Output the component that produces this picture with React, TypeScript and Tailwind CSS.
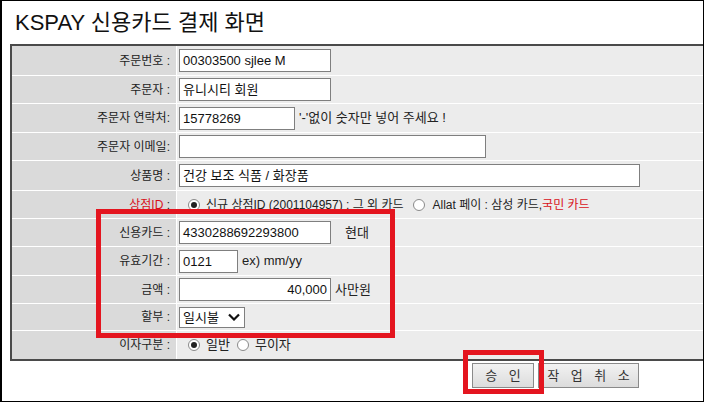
import React from "react";

const rowBase = "flex border-b border-white";

function Label({ children }: { children: React.ReactNode }) {
  return (
    <div className="flex w-[164px] shrink-0 items-center justify-end bg-[#dadada] pr-[6px] text-[12px] text-[#222]">
      {children}
    </div>
  );
}

function Field({ value, w, right }: { value?: string; w: string; right?: boolean }) {
  return (
    <div
      className={`flex h-[23px] ${w} items-center border border-[#7f7f7f] bg-white px-[3px] text-[13px] leading-none text-[#111] ${
        right ? "justify-end" : ""
      }`}
    >
      {value}
    </div>
  );
}

function Radio({ checked }: { checked?: boolean }) {
  return (
    <span className="mx-[3px] flex h-[12px] w-[12px] items-center justify-center rounded-full border border-[#8a8a8a] bg-white">
      {checked ? <span className="h-[6px] w-[6px] rounded-full bg-[#222]" /> : null}
    </span>
  );
}

type Row = { h: string; label: React.ReactNode; body: React.ReactNode };

const rows: Row[] = [
  { h: "h-[30px]", label: "주문번호 :", body: <Field value="00303500 sjlee M" w="w-[152px]" /> },
  { h: "h-[28px]", label: "주문자 :", body: <Field value="유니시티 회원" w="w-[152px]" /> },
  {
    h: "h-[29px]",
    label: "주문자 연락처:",
    body: (
      <>
        <Field value="15778269" w="w-[116px]" />
        <span className="ml-[4px] text-[13px] text-[#222]">'-'없이 숫자만 넣어 주세요 !</span>
      </>
    )
  },
  { h: "h-[28px]", label: "주문자 이메일:", body: <Field w="w-[307px]" /> },
  { h: "h-[30px]", label: "상품명 :", body: <Field value="건강 보조 식품 / 화장품" w="w-[461px]" /> },
  {
    h: "h-[28px]",
    label: (
      <>
        <span className="text-[#d8101a]">상점ID</span>&nbsp;:
      </>
    ),
    body: (
      <div className="flex items-center pl-[6px] text-[12px] text-[#222]">
        <Radio checked />
        <span className="ml-[3px]">신규 상점ID (2001104957) : 그 외 카드</span>
        <span className="ml-[6px]" />
        <Radio />
        <span className="ml-[5px]">
          Allat 페이 : 삼성 카드,<span className="text-[#d8101a]">국민 카드</span>
        </span>
      </div>
    )
  },
  {
    h: "h-[28px]",
    label: "신용카드 :",
    body: (
      <>
        <Field value="4330288692293800" w="w-[152px]" />
        <span className="ml-[14px] text-[13px] text-[#222]">현대</span>
      </>
    )
  },
  {
    h: "h-[29px]",
    label: "유효기간 :",
    body: (
      <>
        <Field value="0121" w="w-[59px]" />
        <span className="ml-[4px] text-[13px] text-[#222]">ex) mm/yy</span>
      </>
    )
  },
  {
    h: "h-[28px]",
    label: "금액 :",
    body: (
      <>
        <Field value="40,000" w="w-[152px]" right />
        <span className="ml-[4px] text-[13px] text-[#222]">사만원</span>
      </>
    )
  },
  {
    h: "h-[27px]",
    label: "할부 :",
    body: (
      <div className="flex h-[21px] w-[66px] items-center justify-between border border-[#7f7f7f] bg-white pl-[3px] pr-[4px] text-[13px] leading-none text-[#111]">
        <span>일시불</span>
        <svg width="12" height="8" viewBox="0 0 12 8">
          <path d="M1 1.5 L6 6.5 L11 1.5" fill="none" stroke="#111" strokeWidth="2.2" />
        </svg>
      </div>
    )
  },
  {
    h: "h-[28px]",
    label: "이자구분 :",
    body: (
      <div className="flex items-center pl-[6px] text-[13px] text-[#222]">
        <Radio checked />
        <span className="ml-[3px]">일반</span>
        <span className="ml-[4px]" />
        <Radio />
        <span className="ml-[3px]">무이자</span>
      </div>
    )
  }
];

export default function App() {
  return (
    <div className="relative h-[402px] w-[704px] overflow-hidden border border-l-2 border-black bg-white font-['Liberation_Sans','Noto_Sans_CJK_KR',sans-serif]">
      <div className="flex h-[43px] items-center pl-[13px] text-[22px] leading-none text-[#111]">
        KSPAY 신용카드 결제 화면
      </div>

      <div className="ml-[8px] w-[700px] border-b-2 border-l-2 border-t-2 border-[#4a4a4a]">
        {rows.map((row, i) => (
          <div key={i} className={`${rowBase} ${row.h} ${i === rows.length - 1 ? "border-b-0" : ""}`}>
            <Label>{row.label}</Label>
            <div className="flex flex-1 items-center border-l border-white bg-[#ececec] pl-[2px]">{row.body}</div>
          </div>
        ))}
      </div>

      <div className="mt-[2px] flex gap-[4px] pl-[470px]">
        <button className="h-[25px] w-[62px] border border-[#8a8a8a] bg-gradient-to-b from-[#f2f2f2] to-[#dcdcdc] pl-[4px] text-[13px] tracking-[4px] text-[#333]">
          승 인
        </button>
        <button className="h-[25px] w-[101px] border border-[#8a8a8a] bg-gradient-to-b from-[#f2f2f2] to-[#dcdcdc] pl-[4px] text-[13px] tracking-[4px] text-[#333]">
          작 업 취 소
        </button>
      </div>

      {/* annotation boxes */}
      <div className="absolute left-[94px] top-[208px] h-[129px] w-[299px] border-[5px] border-[#e4151f]" />
      <div className="absolute left-[461px] top-[349px] h-[44px] w-[81px] border-[5px] border-[#e4151f]" />
    </div>
  );
}
